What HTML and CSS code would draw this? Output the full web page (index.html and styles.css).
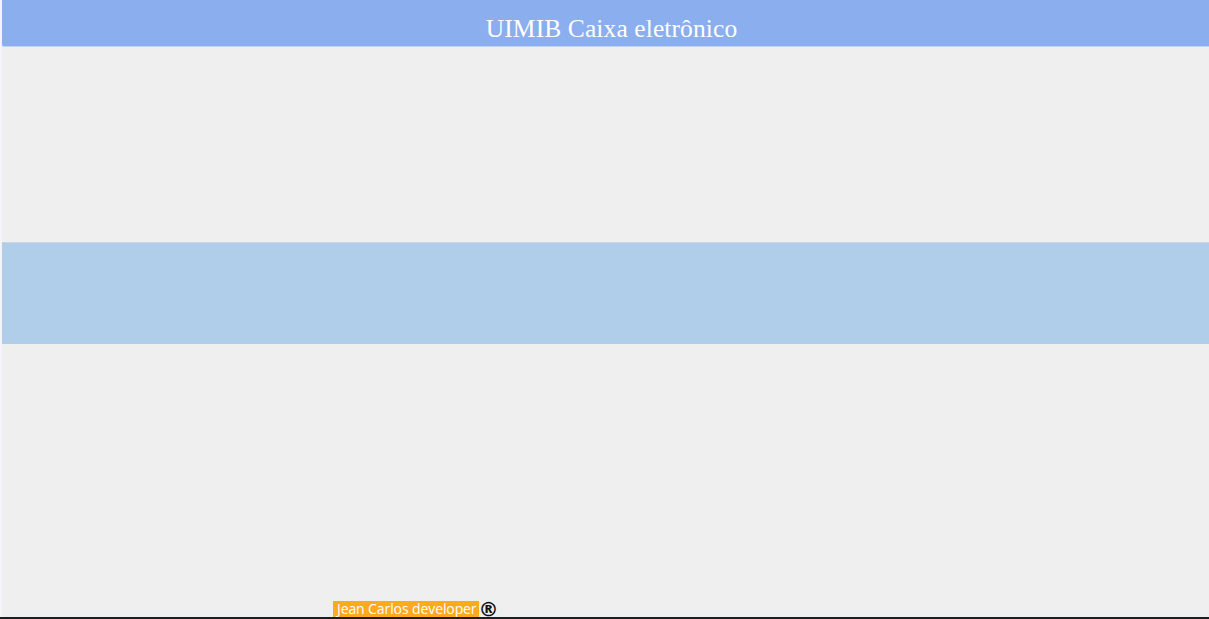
FILE: index.html
```html
<!DOCTYPE html>
<html lang="pt">
<head>
<meta charset="utf-8">
<title>UIMIB Caixa eletrônico</title>
<link rel="stylesheet" href="styles.css">
</head>
<body>
<div class="app">
  <header class="topbar"><h1 class="title">UIMIB Caixa eletrônico</h1></header>
  <main class="content">
    <div class="spacer-top"></div>
    <section class="band"></section>
    <div class="spacer-bottom"></div>
    <footer class="footer"><span class="credit">Jean Carlos developer</span><span class="reg">®</span></footer>
  </main>
  <div class="taskbar"></div>
</div>
</body>
</html>
```
FILE: styles.css
```css
html, body {
  margin: 0;
  padding: 0;
  height: 100%;
  background: #f3f5fb;
  overflow: hidden;
}
.app {
  height: 619px;
  display: flex;
  flex-direction: column;
  margin-left: 2px;
}
.topbar {
  height: 46px;
  background: #8aaeee;
  border-bottom: 1px solid #c6d4ee;
  display: flex;
  align-items: center;
  justify-content: center;
  border-bottom-left-radius: 2px;
}
.title {
  margin: 0;
  font-family: "Liberation Serif", "DejaVu Serif", serif;
  font-weight: normal;
  font-size: 25.5px;
  color: #ffffff;
  padding-top: 11px;
  padding-left: 12px;
  letter-spacing: 0.1px;
}
.content {
  flex: 1;
  background: #efefef;
  display: flex;
  flex-direction: column;
}
.spacer-top {
  height: 195px;
}
.band {
  height: 101px;
  background: #b0cee9;
  border-top: 1px solid #c8d8e8;
}
.spacer-bottom {
  flex: 1;
}
.footer {
  display: flex;
  align-items: flex-end;
  padding-left: 331px;
  height: 16px;
}
.credit {
  background: #ffa91f;
  color: #ffffff;
  font-family: "Open Sans", "Liberation Sans", sans-serif;
  font-size: 14px;
  line-height: 16px;
  padding: 0 2px 0 4px;
  letter-spacing: -0.1px;
}
.reg {
  font-family: "DejaVu Sans", sans-serif;
  font-weight: bold;
  font-size: 20px;
  line-height: 16px;
  color: #111111;
  margin-left: 0;
}
.taskbar {
  height: 2px;
  background: #1a1f24;
  margin-left: -2px;
}
```
